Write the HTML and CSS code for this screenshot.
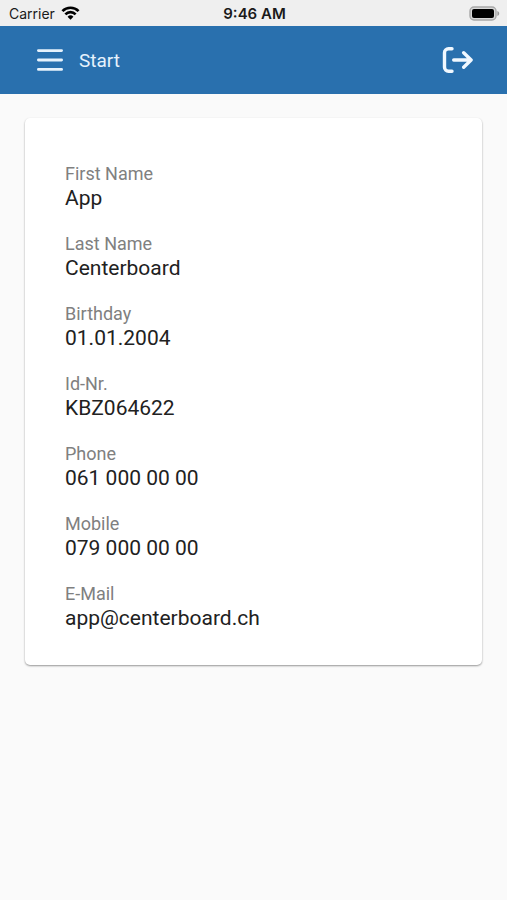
FILE: index.html
```
<!DOCTYPE html>
<html lang="en">
<head>
  <meta charset="UTF-8">
  <meta name="viewport" content="width=device-width, initial-scale=1.0">
  <title>Start</title>
  <link rel="stylesheet" href="styles.css">
</head>
<body>

<!-- Status Bar -->
<div class="statusbar">
  <div class="carrier">
    <span>Carrier</span>
    <svg width="19" height="14" viewBox="0 0 20 14" fill="none" stroke="#000" stroke-width="2.8">
      <path d="M1.5 5a12 12 0 0 1 17 0"/>
      <path d="M4.6 8.4a7.6 7.6 0 0 1 10.8 0"/>
      <path d="M10 14l-3.1-3.1a4.4 4.4 0 0 1 6.2 0z" fill="#000" stroke="none"/>
    </svg>
  </div>
  <div class="time">9:46 AM</div>
  <div class="battery">
    <svg width="31" height="15" viewBox="0 0 31 15">
      <rect x="1" y="1" width="26" height="13" rx="4" fill="#d8d8d8" stroke="#a8a8a8" stroke-width="1.4"/>
      <rect x="3" y="3" width="22" height="9" rx="2" fill="#000"/>
      <path d="M28.4 5c2.4 1 2.4 4 0 5z" fill="#999"/>
    </svg>
  </div>
</div>

<!-- Header -->
<header class="header">
  <button class="icon-button" type="button" aria-label="Menu">
    <svg width="26" height="24" viewBox="0 0 26 24" fill="none" stroke="#e6f2fc" stroke-width="2.8" stroke-linecap="round">
      <path d="M1.4 2.6h23.2M1.4 12h23.2M1.4 21.4h23.2"/>
    </svg>
  </button>
  <h1 class="title">Start</h1>
  <button class="icon-button" type="button" aria-label="Logout">
    <svg width="32" height="28" viewBox="0 0 32 28" fill="none" stroke="#f0f8ff" stroke-width="3.4" stroke-linecap="round" stroke-linejoin="round">
      <path d="M11 2.7H7.5a4 4 0 0 0-4 4v14.6a4 4 0 0 0 4 4H11"/>
      <path d="M12.7 14h17M22.7 6.8l7.4 7.2-7.4 7.2"/>
    </svg>
  </button>
</header>

<!-- Personal Data -->
<main class="content">
  <dl class="card">
    <div class="field">
      <dt>First Name</dt>
      <dd>App</dd>
    </div>
    <div class="field">
      <dt>Last Name</dt>
      <dd>Centerboard</dd>
    </div>
    <div class="field">
      <dt>Birthday</dt>
      <dd>01.01.2004</dd>
    </div>
    <div class="field">
      <dt>Id-Nr.</dt>
      <dd>KBZ064622</dd>
    </div>
    <div class="field">
      <dt>Phone</dt>
      <dd>061 000 00 00</dd>
    </div>
    <div class="field">
      <dt>Mobile</dt>
      <dd>079 000 00 00</dd>
    </div>
    <div class="field">
      <dt>E-Mail</dt>
      <dd>app@centerboard.ch</dd>
    </div>
  </dl>
</main>

</body>
</html>
```

FILE: styles.css
```
/* General Styles */
* {
  box-sizing: border-box;
}

body {
  margin: 0;
  font-family: Roboto, Arial, sans-serif;
  background-color: #fafafa;
}

svg {
  display: block;
}

/* Status Bar */
.statusbar {
  display: grid;
  grid-template-columns: 1fr auto 1fr;
  align-items: center;
  height: 26px;
  padding: 0 7px 0 9px;
  background-color: #efefef;
  color: #1a1a1a;
  font-family: Inter, Arial, sans-serif;
  font-size: 14px;
}

.carrier {
  display: flex;
  align-items: center;
  gap: 6px;
}

.time {
  font-size: 15px;
  font-weight: 600;
}

.battery {
  justify-self: end;
}

/* Header */
.header {
  display: flex;
  align-items: center;
  gap: 16px;
  height: 68px;
  padding: 0 34px 0 37px;
  background-color: #2970ae;
}

.title {
  flex: 1;
  margin: 0;
  color: #e6f2fc;
  font-size: 19px;
  font-weight: 400;
}

.icon-button {
  padding: 0;
  border: 0;
  background: none;
  cursor: pointer;
}

/* Card */
.content {
  padding: 24px 25px;
}

.card {
  display: flex;
  flex-direction: column;
  gap: 22px;
  margin: 0;
  padding: 44px 40px 35px;
  border-radius: 5px;
  background-color: #fff;
  box-shadow: 0 1px 2px rgba(0, 0, 0, 0.4);
}

.field dt,
.field dd {
  margin: 0;
  line-height: 24px;
}

.field dt {
  color: #808080;
  font-size: 18px;
}

.field dd {
  color: #212121;
  font-size: 21px;
}
```
